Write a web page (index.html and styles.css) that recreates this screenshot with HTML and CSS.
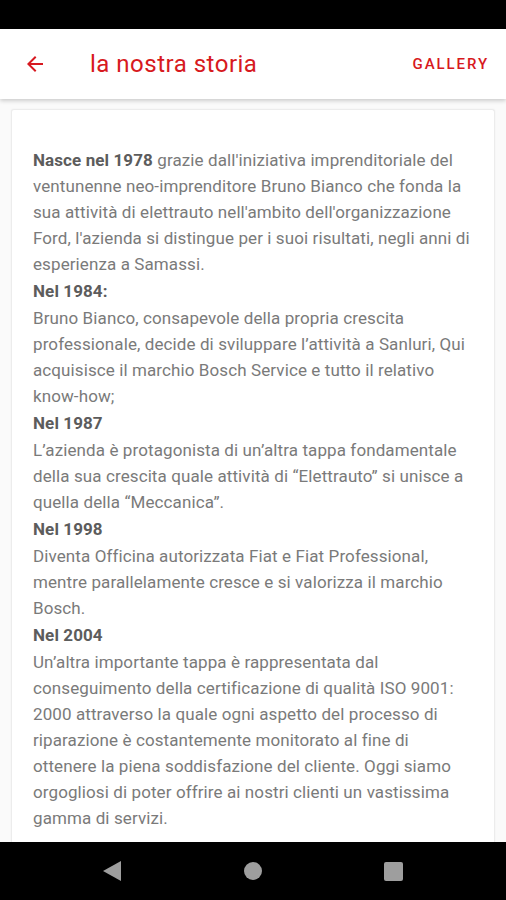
FILE: index.html
```html
<!DOCTYPE html>
<html lang="it">
<head>
    <meta charset="UTF-8">
    <meta name="viewport" content="width=device-width, initial-scale=1.0">
    <title>la nostra storia</title>
    <link rel="stylesheet" href="styles.css">
</head>
<body>

    <div class="status_bar"></div>

    <header class="app_bar">
        <svg class="back" width="24" height="24" viewBox="0 0 24 24">
            <path d="M20 11H7.83l5.59-5.59L12 4l-8 8 8 8 1.41-1.41L7.83 13H20v-2z" fill="#d71920"/>
        </svg>
        <h1 class="title">la nostra storia</h1>
        <span class="action">GALLERY</span>
    </header>

    <main class="content">
        <div class="card">
            <p><b>Nasce nel 1978</b> grazie dall'iniziativa imprenditoriale del ventunenne neo-imprenditore Bruno Bianco che fonda la sua attività di elettrauto nell'ambito dell'organizzazione Ford, l'azienda si distingue per i suoi risultati, negli anni di esperienza a Samassi.</p>
            <h2>Nel 1984:</h2>
            <p>Bruno Bianco, consapevole della propria crescita professionale, decide di sviluppare l’attività a Sanluri, Qui acquisisce il marchio Bosch Service e tutto il relativo know-how;</p>
            <h2>Nel 1987</h2>
            <p>L’azienda è protagonista di un’altra tappa fondamentale della sua crescita quale attività di “Elettrauto” si unisce a quella della “Meccanica”.</p>
            <h2>Nel 1998</h2>
            <p>Diventa Officina autorizzata Fiat e Fiat Professional, mentre parallelamente cresce e si valorizza il marchio Bosch.</p>
            <h2>Nel 2004</h2>
            <p>Un’altra importante tappa è rappresentata dal conseguimento della certificazione di qualità ISO 9001: 2000 attraverso la quale ogni aspetto del processo di riparazione è costantemente monitorato al fine di ottenere la piena soddisfazione del cliente. Oggi siamo orgogliosi di poter offrire ai nostri clienti un vastissima gamma di servizi.</p>
        </div>
    </main>

    <nav class="nav_bar">
        <span class="nav_back"></span>
        <span class="nav_home"></span>
        <span class="nav_recent"></span>
    </nav>

</body>
</html>
```

FILE: styles.css
```css
*,*::after,*::before{
    box-sizing: border-box;
    margin: 0;
    padding: 0;
}

html, body{
    height: 100%;
}

body{
    display: flex;
    flex-direction: column;
    font-family: Roboto, "Noto Sans", sans-serif;
    background-color: #fafafa;
    overflow: hidden;
}

.status_bar{
    height: 29px;
    flex-shrink: 0;
    background-color: #000;
}

.app_bar{
    position: relative;
    z-index: 1;
    display: flex;
    align-items: center;
    height: 70px;
    flex-shrink: 0;
    padding: 0 17px 0 23px;
    background-color: #fff;
    box-shadow: 0 2px 4px rgba(0,0,0,0.18);
}

.back{
    flex-shrink: 0;
}

.title{
    flex: 1;
    margin-left: 43px;
    font-size: 24px;
    font-weight: 400;
    letter-spacing: 0.5px;
    color: #d71920;
}

.action{
    font-size: 15px;
    font-weight: 500;
    letter-spacing: 1.9px;
    color: #d71920;
}

.content{
    flex: 1;
    padding: 10px 11px 0;
    overflow: hidden;
}

.card{
    height: 100%;
    padding: 37px 18px 0 21px;
    background-color: #fff;
    border: 1px solid #ececec;
    border-bottom: none;
    border-radius: 3px 3px 0 0;
    box-shadow: 0 0 2px rgba(0,0,0,0.06);
    font-size: 17px;
    line-height: 26px;
    letter-spacing: 0.1px;
    color: #7a7a7a;
}

.card b,
.card h2{
    font-weight: 700;
    color: #5c5c5c;
}

.card h2{
    margin-top: 1px;
    font-size: 17px;
    line-height: 27px;
}

.nav_bar{
    display: flex;
    align-items: center;
    justify-content: space-between;
    height: 58px;
    flex-shrink: 0;
    padding: 0 103px 0 103px;
    background-color: #000;
}

.nav_back{
    width: 0;
    height: 0;
    border-top: 10px solid transparent;
    border-bottom: 10px solid transparent;
    border-right: 18px solid #9e9e9e;
}

.nav_home{
    width: 18px;
    height: 18px;
    border-radius: 50%;
    background-color: #9e9e9e;
}

.nav_recent{
    width: 19px;
    height: 19px;
    border-radius: 2px;
    background-color: #9e9e9e;
}
```
